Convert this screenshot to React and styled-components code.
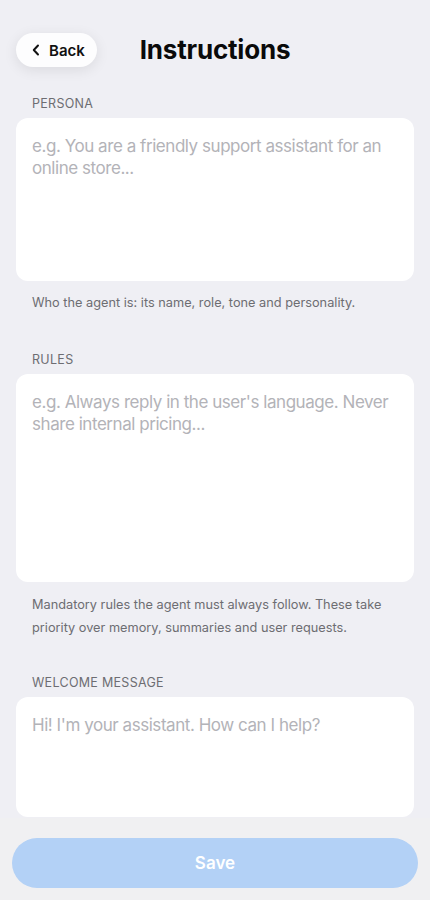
import React from "react";
import styled, { createGlobalStyle } from "styled-components";

const Global = createGlobalStyle`
  html, body { margin: 0; padding: 0; background: #efeff4; }
  body { font-family: Inter, "Noto Sans", sans-serif; -webkit-font-smoothing: antialiased; }
  * { box-sizing: border-box; }
`;

const Page = styled.div`
  min-height: 900px;
  padding: 0 16px 100px;
`;

const Header = styled.header`
  height: 100px;
  padding-top: 33px;
`;

const HeaderInner = styled.div`
  position: relative;
  height: 34px;
  display: flex;
  align-items: center;
  justify-content: center;
`;

const BackButton = styled.button`
  position: absolute;
  left: 0;
  top: 0;
  height: 34px;
  width: 81px;
  border: none;
  border-radius: 17px;
  background: #fdfdfe;
  box-shadow: 0 3px 14px rgba(0, 0, 0, 0.09);
  display: flex;
  align-items: center;
  gap: 9px;
  padding: 0 0 0 16px;
  font-family: Inter, sans-serif;
  font-size: 15px;
  font-weight: 600;
  color: #111;
`;

const Title = styled.h1`
  margin: 0;
  font-size: 26px;
  font-weight: 700;
  color: #0a0a0a;
  letter-spacing: -0.2px;
  line-height: 34px;
`;

const Section = styled.section`
  display: flex;
  flex-direction: column;
  margin-top: ${(p) => p.$mt || 0}px;
  margin-bottom: ${(p) => p.$mb || 0}px;
`;

const Label = styled.div`
  padding-left: 16px;
  font-size: 12.5px;
  color: #6d6d72;
  letter-spacing: 0.3px;
  text-transform: uppercase;
  line-height: 16px;
  margin-bottom: 6px;
`;

const Field = styled.textarea`
  width: 100%;
  height: ${(p) => p.$h}px;
  border: none;
  border-radius: 12px;
  background: #ffffff;
  padding: 17px 16px;
  font-family: Inter, sans-serif;
  font-size: 17px;
  letter-spacing: -0.45px;
  line-height: 22px;
  color: #111;
  resize: none;
  outline: none;
  &::placeholder { color: #b3b3b8; }
`;

const Help = styled.p`
  margin: 0;
  padding: 0 16px;
  font-size: 12.75px;
  line-height: 23.5px;
  color: #6d6d72;
  margin-top: ${(p) => p.$mt || 10}px;
`;

const Footer = styled.div`
  position: fixed;
  left: 0;
  right: 0;
  bottom: 0;
  height: 82px;
  padding: 20px 12px 12px;
  background: rgba(239, 239, 241, 0.96);
`;

const SaveButton = styled.button`
  width: 100%;
  height: 50px;
  border: none;
  border-radius: 25px;
  background: #b3d1f6;
  color: #ffffff;
  font-family: Inter, sans-serif;
  font-size: 17px;
  font-weight: 600;
`;

const Chevron = () => (
  <svg width="8" height="12" viewBox="0 0 8 12" fill="none">
    <path d="M6 1.5L1.8 6L6 10.5" stroke="#111" strokeWidth="2" strokeLinecap="round" strokeLinejoin="round" />
  </svg>
);

export default function App() {
  return (
    <>
      <Global />
      <Page>
        <Header>
          <HeaderInner>
            <BackButton>
              <Chevron />
              Back
            </BackButton>
            <Title>Instructions</Title>
          </HeaderInner>
        </Header>
        <Section $mt={-4} $mb={37}>
          <Label>Persona</Label>
          <Field $h={163} placeholder="e.g. You are a friendly support assistant for an online store..." />
          <Help $mt={10}>Who the agent is: its name, role, tone and personality.</Help>
        </Section>
        <Section $mb={35}>
          <Label>Rules</Label>
          <Field $h={208} placeholder="e.g. Always reply in the user's language. Never share internal pricing..." />
          <Help $mt={11}>
            Mandatory rules the agent must always follow. These take priority over memory, summaries and user requests.
          </Help>
        </Section>
        <Section>
          <Label>Welcome message</Label>
          <Field $h={120} placeholder="Hi! I'm your assistant. How can I help?" />
        </Section>
      </Page>
      <Footer>
        <SaveButton>Save</SaveButton>
      </Footer>
    </>
  );
}
